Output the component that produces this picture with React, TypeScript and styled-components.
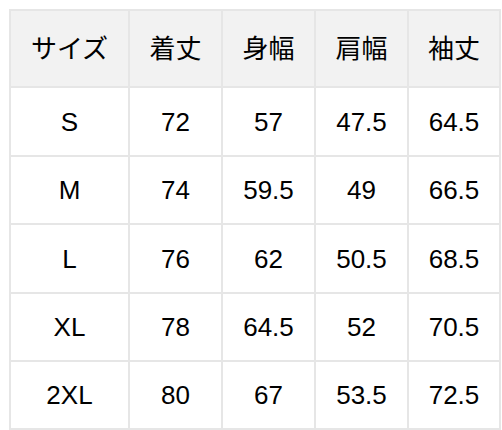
import React from "react";
import styled, { createGlobalStyle } from "styled-components";

const Global = createGlobalStyle`
  html, body { margin: 0; padding: 0; background: #ffffff; }
  body { font-family: "Liberation Sans", "Noto Sans CJK JP", sans-serif; }
`;

const Page = styled.div`
  padding: 9px 0 0 9px;
`;

const Grid = styled.div`
  display: grid;
  width: 492px;
  box-sizing: border-box;
  grid-template-columns: 117px 91px 91px 91px 90px;
  grid-template-rows: 75px 67px 66px 67px 66px 66px;
  gap: 2px;
  padding: 2px;
  background: #e6e6e6;
`;

const Cell = styled.div<{ $head?: boolean }>`
  display: flex;
  align-items: center;
  justify-content: center;
  background: ${(p) => (p.$head ? "#f2f2f2" : "#ffffff")};
  color: #000000;
  font-family: "Liberation Sans", "Noto Sans CJK JP", sans-serif;
  font-size: 26px;
  line-height: 1;
  white-space: nowrap;
`;

const head = ["サイズ", "着丈", "身幅", "肩幅", "袖丈"];
const rows = [
  ["S", "72", "57", "47.5", "64.5"],
  ["M", "74", "59.5", "49", "66.5"],
  ["L", "76", "62", "50.5", "68.5"],
  ["XL", "78", "64.5", "52", "70.5"],
  ["2XL", "80", "67", "53.5", "72.5"],
];

export default function App() {
  return (
    <>
      <Global />
      <Page>
        <Grid>
          {head.map((h) => (
            <Cell key={h} $head>
              {h}
            </Cell>
          ))}
          {rows.map((r) =>
            r.map((v, i) => <Cell key={r[0] + i}>{v}</Cell>)
          )}
        </Grid>
      </Page>
    </>
  );
}
